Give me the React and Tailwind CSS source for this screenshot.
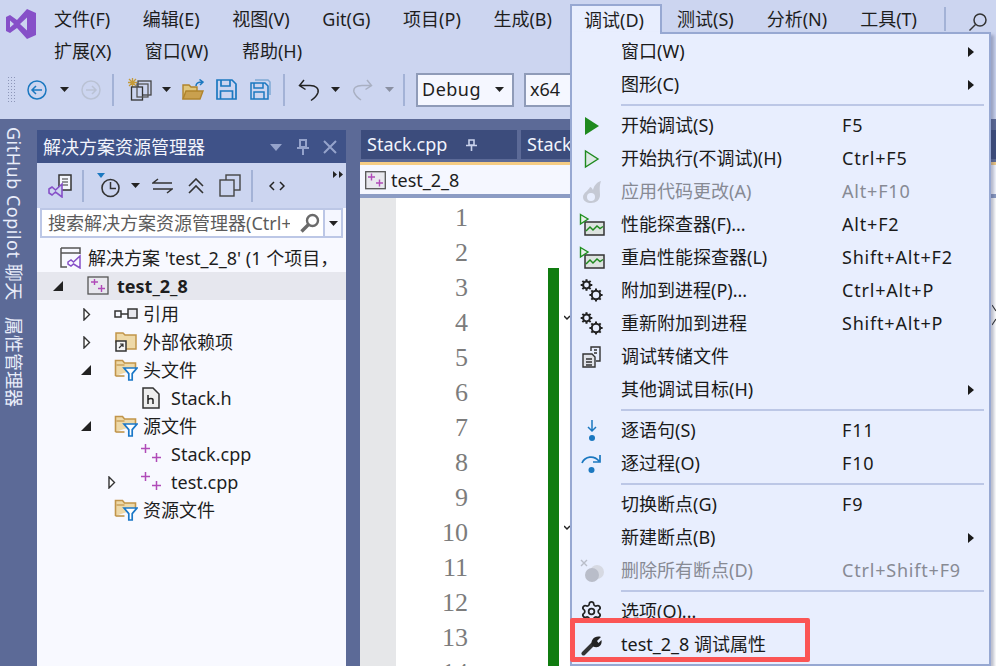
import { Settings } from "lucide-react";

const menuRow1 = ["文件(F)", "编辑(E)", "视图(V)", "Git(G)", "项目(P)", "生成(B)"];

function PlusPlus({ size = 22, color = "#b04bb8" }) {
  return (
    <svg width={size} height={size} viewBox="0 0 22 22" fill="none" stroke={color} strokeWidth="1.5">
      <path d="M1 5.5h9M5.5 1v9M12 14.5h9M16.5 10v9" />
    </svg>
  );
}

function ProjectIcon() {
  return (
    <svg width="22" height="20" viewBox="0 0 22 20" fill="none">
      <rect x="1" y="1" width="20" height="17" fill="#e8e8ee" stroke="#555" strokeWidth="1.3" />
      <path d="M4 6h7M7.5 3v6" stroke="#b04bb8" strokeWidth="1.4" />
      <path d="M11 12.5h7M14.5 9v7" stroke="#b04bb8" strokeWidth="1.4" />
    </svg>
  );
}

function FilterFolder() {
  return (
    <svg width="24" height="24" viewBox="0 0 24 24" fill="none">
      <path d="M1.5 18V2.5h7l2 2.5h11v6" fill="#eed9a8" stroke="#c1954a" strokeWidth="1.6" />
      <path d="M1.5 18h9" stroke="#c1954a" strokeWidth="1.6" />
      <path d="M2.5 7h8" stroke="#c1954a" strokeWidth="1.2" />
      <path d="M10 10h13l-4.8 5.6V22h-3.4v-6.4z" fill="#fff" stroke="#1b78c8" strokeWidth="1.7" />
    </svg>
  );
}

function TreeOpen() {
  return (
    <svg width="10" height="10" viewBox="0 0 10 10">
      <path d="M0 10L10 0v10z" fill="#222" />
    </svg>
  );
}

function TreeClosed() {
  return (
    <svg width="8" height="13" viewBox="0 0 8 13" fill="none">
      <path d="M1 1l5.5 5.500L1 12z" stroke="#333" strokeWidth="1.4" fill="#fff" />
    </svg>
  );
}

// small toothed gear: a ring plus eight short teeth
function Gear({ r, x, y }) {
  const teeth = [0, 45, 90, 135, 180, 225, 270, 315];
  return (
    <g transform={`translate(${x} ${y})`} stroke="#222">
      <circle r={r} fill="none" strokeWidth="2" />
      {teeth.map((a) => (
        <path key={a} d={`M${r} 0h2.4`} strokeWidth="2" transform={`rotate(${a})`} />
      ))}
    </g>
  );
}

function GearsIcon() {
  return (
    <svg width="24" height="24" viewBox="0 0 24 24">
      <Gear r={3.4} x={6.5} y={6} />
      <Gear r={4.2} x={16} y={16} />
    </svg>
  );
}

function PerfIcon() {
  return (
    <svg width="26" height="24" viewBox="0 0 26 24" fill="none">
      <path d="M6 9h19v13H6z" fill="#dde3e0" stroke="#333" strokeWidth="1.5" />
      <path d="M7 18l4-4 3 3 4-4 3 2.500 3-2" stroke="#1f8a1f" strokeWidth="1.5" />
      <path d="M1.500 1.500L9 6l-7.500 5z" fill="#e8f0ea" stroke="#1f8f1f" strokeWidth="1.4" />
    </svg>
  );
}

function MenuRow({ icon, label, keys, arrow, disabled }) {
  return (
    <div className={`flex h-[33px] items-center ${disabled ? "text-[#878a94]" : "text-[#1a1a1a]"}`}>
      <div className="flex w-[49px] justify-center pr-[10px]">{icon}</div>
      <div className="w-[221px] whitespace-nowrap">{label}</div>
      <div className="flex-1 whitespace-nowrap tracking-[0.8px]">{keys}</div>
      {arrow && (
        <svg className="mr-[15px]" width="6" height="10" viewBox="0 0 6 10">
          <path d="M0 0l6 5-6 5z" fill="#1a1a1a" />
        </svg>
      )}
    </div>
  );
}

function MenuSep() {
  return (
    <div className="flex h-[8px] items-center pl-[49px] pr-[5px]">
      <div className="h-[2px] w-full bg-[#bcc7e6]" />
    </div>
  );
}

function TreeRow({ indent, arrow, icon, label, selected, gap = "ml-[4px]" }) {
  return (
    <div className={`flex h-[28px] items-center whitespace-nowrap ${selected ? "bg-[#e6e7ee] font-bold" : ""}`}>
      <div className="flex shrink-0 items-center justify-center" style={{ width: indent }}>
        <span className="ml-auto mr-[22px] flex">{arrow}</span>
      </div>
      <div className="flex w-[26px] shrink-0 justify-center">{icon}</div>
      <div className={gap}>{label}</div>
    </div>
  );
}

export default function App() {
  const nums = [1, 2, 3, 4, 5, 6, 7, 8, 9, 10, 11, 12, 13, 14];

  return (
    <div className="relative flex h-[666px] w-[996px] flex-col overflow-hidden bg-[#ccd5f0] font-['Noto_Sans','Noto_Sans_CJK_SC',sans-serif] text-[18px] text-[#1e1e1e]">
      {/* title bar with the menus */}
      <div className="flex h-[70px] shrink-0">
        <div className="flex w-[54px] shrink-0 pt-[9px] pl-[6px]">
          <svg width="30" height="30" viewBox="0 0 30 30">
            <path d="M0 8L4 6 11 11 21 0 30 4V26L21 30 11 19 4 24 0 22zM4 11.500V18.500L8 15zM21 8.500L14 15 21 21.500z" fill="#8650c8" fillRule="evenodd" />
          </svg>
        </div>
        <div className="flex flex-1 flex-col">
          <div className="flex h-[34px] items-center gap-[32.6px] pt-[5px]">
            {menuRow1.map((t) => (
              <span key={t} className="whitespace-nowrap">{t}</span>
            ))}
          </div>
          <div className="flex h-[32px] items-center gap-[33.5px] pt-[2px]">
            <span>扩展(X)</span>
            <span>窗口(W)</span>
            <span>帮助(H)</span>
          </div>
        </div>
      </div>

      {/* toolbar */}
      <div className="flex h-[49px] shrink-0 items-center pl-[7px] pb-[10px]">
        <div className="h-[28px] w-[9px] bg-[radial-gradient(#8d96b8_1px,transparent_1px)] bg-[length:3px_3px]" />
        <svg className="ml-[11px]" width="20" height="20" viewBox="0 0 20 20" fill="none" stroke="#1b78c0" strokeWidth="1.5">
          <circle cx="10" cy="10" r="9" />
          <path d="M15 10H5M9 6l-4 4 4 4" />
        </svg>
        <svg className="ml-[13px]" width="9" height="5" viewBox="0 0 9 5"><path d="M0 0h9L4.500 5z" fill="#222" /></svg>
        <svg className="ml-[12px]" width="20" height="20" viewBox="0 0 20 20" fill="none" stroke="#bac2d4" strokeWidth="1.5">
          <circle cx="10" cy="10" r="9" />
          <path d="M5 10h10M11 6l4 4-4 4" />
        </svg>
        <div className="ml-[11px] h-[32px] w-[2px] bg-[#a3b2d6]" />
        <svg className="ml-[14px]" width="25" height="24" viewBox="0 0 25 24" fill="none">
          <path d="M1 1l7 7M8 1L1 8M4.500 0v9M0 4.500h9" stroke="#c49a3a" strokeWidth="1.3" />
          <rect x="10" y="3" width="13" height="14" stroke="#444" strokeWidth="1.3" />
          <rect x="3.500" y="9" width="11" height="13" fill="#ccd5f0" stroke="#333" strokeWidth="1.3" />
          <rect x="9" y="6" width="11" height="13" stroke="#555" strokeWidth="1.3" />
        </svg>
        <svg className="ml-[9px]" width="9" height="5" viewBox="0 0 9 5"><path d="M0 0h9L4.500 5z" fill="#222" /></svg>
        <svg className="ml-[11px]" width="23" height="22" viewBox="0 0 23 22" fill="none">
          <path d="M1 20V6h6l2 2h6v4" fill="#e0c67c" stroke="#b0842c" strokeWidth="1.4" />
          <path d="M1 20l3-8h17l-3 8z" fill="#c9a04e" stroke="#b0842c" strokeWidth="1.4" />
          <path d="M14 7c0-3 2-4 6-4M17.500 0.500L21 3l-3 3" stroke="#1b78c0" strokeWidth="1.5" />
        </svg>
        <svg className="ml-[11px]" width="21" height="21" viewBox="0 0 21 21" fill="none" stroke="#1b78c0" strokeWidth="1.7">
          <path d="M1 1h15l4 4v15H1z" />
          <path d="M5 1v6h9V1M4.500 20v-8h12v8" />
        </svg>
        <svg className="ml-[13px]" width="21" height="21" viewBox="0 0 21 21" fill="none" stroke="#1b78c0" strokeWidth="1.5">
          <path d="M5 1h13l2 2v13" stroke="#7fa9d4" />
          <path d="M1 4h14l3 3v13H1z" />
          <path d="M4 4v5h9V4M4 20v-7h10v7" />
        </svg>
        <div className="ml-[12px] h-[32px] w-[2px] bg-[#a3b2d6]" />
        <svg className="ml-[13px]" width="22" height="24" viewBox="0 0 22 24" fill="none" stroke="#222" strokeWidth="1.5">
          <path d="M6 2L1.500 7.500l6 4M2 7.500h10c6 0 9 3 8 7-1 3-4 6-7 8" />
        </svg>
        <svg className="ml-[11px]" width="9" height="5" viewBox="0 0 9 5"><path d="M0 0h9L4.500 5z" fill="#222" /></svg>
        <svg className="ml-[13px]" width="20" height="24" viewBox="0 0 20 24" fill="none" stroke="#a9b0c2" strokeWidth="1.5">
          <path d="M14 2l4.500 5.500-6 4M18 7.500H9C3 7.500 0 10 1 14c1 3 4 6 7 8" />
        </svg>
        <svg className="ml-[12px]" width="9" height="5" viewBox="0 0 9 5"><path d="M0 0h9L4.500 5z" fill="#8a90a2" /></svg>
        <div className="ml-[9px] h-[32px] w-[2px] bg-[#a3b2d6]" />
        <div className="ml-[11px] flex h-[34px] w-[98px] items-center justify-between border-2 border-[#8f9bb8] bg-[#f5f7ff] pl-[4px] pr-[8px]">
          <span className="tracking-[0.5px]">Debug</span>
          <svg width="9" height="5" viewBox="0 0 9 5"><path d="M0 0h9L4.500 5z" fill="#222" /></svg>
        </div>
        <div className="ml-[10px] flex h-[34px] w-[60px] items-center border-2 border-[#8f9bb8] bg-[#f5f7ff] pl-[4px]">x64</div>
      </div>

      {/* body */}
      <div className="flex min-h-0 flex-1 bg-[#5c6a97]">
        {/* vertical tabs */}
        <div className="w-[37px] shrink-0 pt-[8px]">
          <div className="flex w-[28px] items-center gap-[16px] whitespace-nowrap leading-[28px] text-[#e9edfa] [text-orientation:sideways] [writing-mode:vertical-rl]">
            <span className="tracking-[0.5px]">GitHub Copilot 聊天</span>
            <span>属性管理器</span>
          </div>
        </div>

        {/* solution explorer */}
        <div className="mt-[11px] flex w-[309px] shrink-0 flex-col bg-[#f8f9ff]">
          <div className="flex h-[33px] shrink-0 items-center bg-[#3f5288] pl-[6px] pr-[9px] pt-[1px] text-[#f2f4fc]">
            <span>解决方案资源管理器</span>
            <svg className="ml-auto" width="12" height="7" viewBox="0 0 12 7"><path d="M0 0h12L6 7z" fill="#95a3cb" /></svg>
            <svg className="ml-[15px]" width="12" height="16" viewBox="0 0 12 16" fill="none" stroke="#95a3cb" strokeWidth="2">
              <path d="M3 1h6v7H3zM0 9h12M6 9v7" />
            </svg>
            <svg className="ml-[14px]" width="14" height="14" viewBox="0 0 14 14" stroke="#95a3cb" strokeWidth="2">
              <path d="M1 1l12 12M13 1L1 13" />
            </svg>
          </div>

          <div className="relative flex h-[45px] shrink-0 items-center bg-[#ccd5f0] pl-[11px]">
            <svg width="24" height="24" viewBox="0 0 24 24" fill="none">
              <rect x="11" y="1" width="12" height="15" fill="#f4f6fc" stroke="#333" strokeWidth="1.5" />
              <path d="M14 5h6M14 8h6M14 11h6" stroke="#333" strokeWidth="1.2" />
              <path d="M1 15l3-2 3.500 3L14 10v13l-6.500-5L4 21l-3-2z" fill="#ccd5f0" stroke="#8650c8" strokeWidth="1.6" />
            </svg>
            <div className="ml-[10px] h-[32px] w-[2px] bg-[#a3b2d6]" />
            <svg className="ml-[13px]" width="24" height="26" viewBox="0 0 24 26" fill="none">
              <path d="M0 0h8L4 5z" fill="#1b78c0" />
              <circle cx="13.500" cy="15" r="8.500" stroke="#333" strokeWidth="1.6" />
              <path d="M13.500 9v6.500H19" stroke="#333" strokeWidth="1.5" />
            </svg>
            <svg className="ml-[10px]" width="9" height="5" viewBox="0 0 9 5"><path d="M0 0h9L4.500 5z" fill="#222" /></svg>
            <svg className="ml-[12px]" width="21" height="16" viewBox="0 0 21 16" fill="none" stroke="#333" strokeWidth="1.5">
              <path d="M20 5H1l5-4M1 11h19l-5 4" />
            </svg>
            <svg className="ml-[15px]" width="16" height="16" viewBox="0 0 16 16" fill="none" stroke="#333" strokeWidth="1.6">
              <path d="M1 8l7-7 7 7M1 15l7-7 7 7" />
            </svg>
            <svg className="ml-[15px]" width="22" height="24" viewBox="0 0 22 24" fill="none" stroke="#444" strokeWidth="1.4">
              <rect x="7" y="1" width="14" height="15" />
              <rect x="1" y="6" width="14" height="16" fill="#ccd5f0" />
            </svg>
            <div className="ml-[10px] h-[32px] w-[2px] bg-[#a3b2d6]" />
            <svg className="ml-[16px]" width="16" height="10" viewBox="0 0 16 10" fill="none" stroke="#222" strokeWidth="1.5">
              <path d="M5 1L1 5l4 4M11 1l4 4-4 4" />
            </svg>
            <svg className="absolute top-[8px] right-[3px]" width="10" height="7" viewBox="0 0 10 7"><path d="M0 0l4 3.500L0 7zM6 0l4 3.500L6 7z" fill="#222" /></svg>
          </div>

          <div className="mx-[3px] flex h-[30px] shrink-0 border-2 border-[#bcc7e6] bg-[#fff]">
            <div className="w-[248px] overflow-hidden whitespace-nowrap pl-[6px] leading-[26px] text-[#5c5c5c]">搜索解决方案资源管理器(Ctrl+E)</div>
            <svg className="ml-[10px] mt-[3px]" width="20" height="20" viewBox="0 0 20 20" fill="none" stroke="#6a6a6a">
              <circle cx="12.500" cy="7.500" r="5.500" strokeWidth="2.400" />
              <path d="M8.500 11.500L1.500 18.500" strokeWidth="3.400" />
            </svg>
            <div className="ml-auto flex w-[18px] items-center justify-center border-l-2 border-[#bcc7e6] bg-[#f5f7ff]">
              <svg width="9" height="5" viewBox="0 0 9 5"><path d="M0 0h9L4.500 5z" fill="#222" /></svg>
            </div>
          </div>

          <div className="pt-[6px]">
            <div className="flex h-[28px] items-center overflow-hidden whitespace-nowrap pl-[23px]">
              <svg className="shrink-0" width="22" height="22" viewBox="0 0 22 22" fill="none">
                <path d="M1 6h19M1 1h19v6M1 1v19h6" stroke="#555" strokeWidth="1.5" />
                <path d="M8 15l3-2 2.500 2L20 9v12l-6.500-4L11 19l-3-2z" fill="#f8f9ff" stroke="#8650c8" strokeWidth="1.5" />
              </svg>
              <span className="ml-[6px]">解决方案 'test_2_8' (1 个项目，</span>
            </div>
            <TreeRow indent={48} selected arrow={<TreeOpen />} icon={<ProjectIcon />} label="test_2_8" gap="ml-[6px]" />
            <TreeRow indent={76} arrow={<TreeClosed />} icon={
              <svg width="24" height="14" viewBox="0 0 24 14" fill="none" stroke="#333" strokeWidth="1.500">
                <rect x="1" y="4" width="6" height="6" /><path d="M7 7h7" /><rect x="14" y="2" width="9" height="9" fill="#e8e8ee" />
              </svg>
            } label="引用" />
            <TreeRow indent={76} arrow={<TreeClosed />} icon={
              <svg width="22" height="20" viewBox="0 0 22 20" fill="none">
                <path d="M1 11V1h7l2 2h11v14H11" fill="#eed9a8" stroke="#c1954a" strokeWidth="1.500" />
                <rect x="1" y="9" width="10" height="10" fill="#f5f5f5" stroke="#333" strokeWidth="1.500" />
                <path d="M4 16l4-4M5 12h3v3" stroke="#333" strokeWidth="1.200" />
              </svg>
            } label="外部依赖项" />
            <TreeRow indent={76} arrow={<TreeOpen />} icon={<FilterFolder />} label="头文件" />
            <TreeRow indent={101} gap="ml-[7px]" icon={
              <svg width="18" height="22" viewBox="0 0 18 22" fill="none">
                <path d="M1 1h10l6 6v14H1z" fill="#eee" stroke="#333" strokeWidth="1.500" />
                <path d="M6 8v9M6 13c1-2 5-2 5 0v4" stroke="#222" strokeWidth="1.500" />
              </svg>
            } label="Stack.h" />
            <TreeRow indent={76} arrow={<TreeOpen />} icon={<FilterFolder />} label="源文件" />
            <TreeRow indent={101} gap="ml-[7px]" icon={<PlusPlus />} label="Stack.cpp" />
            <TreeRow indent={101} gap="ml-[7px]" arrow={<TreeClosed />} icon={<PlusPlus />} label="test.cpp" />
            <TreeRow indent={76} icon={<FilterFolder />} label="资源文件" />
          </div>
        </div>

        <div className="w-[14px] shrink-0" />

        {/* editor side */}
        <div className="mt-[11px] flex min-w-0 flex-1 flex-col">
          <div className="flex h-[30px] shrink-0 gap-[4px] pb-[1px] text-[#f2f4fc]">
            <div className="ml-[1px] flex w-[156px] items-center bg-[#3c4c7c] pl-[6px]">
              <span>Stack.cpp</span>
              <svg className="ml-[19px]" width="11" height="12" viewBox="0 0 11 12" fill="none" stroke="#c9d2ec" strokeWidth="1.600">
                <path d="M3 1h5v5H3zM0 6.500h11M5.500 7v5" />
              </svg>
            </div>
            <div className="flex flex-1 items-center bg-[#3c4c7c] pl-[6px]">Stack</div>
          </div>
          <div className="h-[5px] shrink-0 border-t-2 border-[#5c6a97] bg-[#f5cc84]" />
          <div className="flex h-[33px] shrink-0 items-center border-b-[4px] border-[#8c9cc4] bg-[#f5f7ff] pl-[5px] pt-[1px]">
            <svg width="21" height="19" viewBox="0 0 21 19" fill="none">
              <rect x="0.700" y="0.700" width="19.600" height="17" fill="#e8e8ee" stroke="#555" strokeWidth="1.300" />
              <path d="M3 6h7M6.500 2.500v7M11 12h7M14.500 8.500v7" stroke="#b04bb8" strokeWidth="1.400" />
            </svg>
            <span className="ml-[5px]">test_2_8</span>
          </div>
          <div className="flex min-h-0 flex-1 overflow-hidden bg-white">
            <div className="w-[36px] shrink-0 bg-[#e6e7e9]" />
            <div className="w-[72px] shrink-0 pt-[2px] text-right font-['Liberation_Serif',serif] text-[26px] text-[#7c7c7c]">
              {nums.map((n) => (
                <div key={n} className="h-[35px] leading-[35px]">{n}</div>
              ))}
            </div>
            <div className="ml-[80px] mt-[70px] w-[11px] shrink-0 bg-[#107c10]" />
            <div className="flex-1 bg-white" />
          </div>
        </div>
      </div>

      {/* fold marks peeking out beside the menu */}
      <svg className="absolute top-[315px] left-[564px]" width="6" height="6" viewBox="0 0 6 6" fill="none" stroke="#222" strokeWidth="1.500"><path d="M0 1l3 3 3-3" /></svg>
      <svg className="absolute top-[525px] left-[564px]" width="6" height="6" viewBox="0 0 6 6" fill="none" stroke="#222" strokeWidth="1.500"><path d="M0 1l3 3 3-3" /></svg>
      <svg className="absolute top-[304px] left-[992px]" width="4" height="22" viewBox="0 0 4 22" fill="none" stroke="#333" strokeWidth="1.200"><path d="M0 1l4 6M4 15l-4 6" /></svg>

      {/* top menu items behind the open menu */}
      <div className="absolute top-0 left-[677px] flex h-[34px] items-center gap-[33px] whitespace-nowrap pt-[5px]">
        <span>测试(S)</span>
        <span>分析(N)</span>
        <span>工具(T)</span>
      </div>
      <div className="absolute top-[7px] left-[944px] h-[24px] w-[2px] bg-[#a3b2d6]" />
      <svg className="absolute top-[12px] left-[968px]" width="20" height="20" viewBox="0 0 20 20" fill="none" stroke="#333" strokeWidth="1.500">
        <circle cx="12" cy="8" r="6" /><path d="M7.500 12.500L1.500 18.500" />
      </svg>

      {/* open debug menu */}
      <div className="absolute top-[4px] left-[570px] flex h-[30px] w-[92px] items-center border-x-2 border-t-2 border-[#97a8d2] bg-[#e8eefe] pl-[12px]">调试(D)</div>
      <div className="absolute top-[32px] left-[570px] h-[634px] w-[421px] border-2 border-[#97a8d2] bg-[#e8eefe] pt-[1px] shadow-[3px_3px_3px_rgba(60,70,110,0.35)]">
        <div className="absolute -top-[2px] left-0 h-[4px] w-[88px] bg-[#e8eefe]" />
        <div className="relative">
          <MenuRow label="窗口(W)" arrow />
          <MenuRow label="图形(C)" arrow />
          <MenuSep />
          <MenuRow label="开始调试(S)" keys="F5" icon={
            <svg width="16" height="20" viewBox="0 0 16 20"><path d="M1 1v18l14-9z" fill="#1f8a1f" /></svg>
          } />
          <MenuRow label="开始执行(不调试)(H)" keys="Ctrl+F5" icon={
            <svg width="16" height="20" viewBox="0 0 16 20" fill="#dce8e4" stroke="#1f8a1f" strokeWidth="1.400"><path d="M1.500 2v16L14 10z" /></svg>
          } />
          <MenuRow disabled label="应用代码更改(A)" keys="Alt+F10" icon={
            <svg width="22" height="24" viewBox="0 0 22 24">
              <path d="M20 1c-6 2-7 6-8 9-1-2-2-3-3-3-1 3-7 6-7 10 0 4 4 6 8 6 5 0 9-3 9-8 0-5-1-8 1-14z" fill="#c5c9d4" />
              <circle cx="10" cy="17" r="4" fill="#e8eefe" />
            </svg>
          } />
          <MenuRow label="性能探查器(F)..." keys="Alt+F2" icon={<PerfIcon />} />
          <MenuRow label="重启性能探查器(L)" keys="Shift+Alt+F2" icon={<PerfIcon />} />
          <MenuRow label="附加到进程(P)..." keys="Ctrl+Alt+P" icon={<GearsIcon />} />
          <MenuRow label="重新附加到进程" keys="Shift+Alt+P" icon={<GearsIcon />} />
          <MenuRow label="调试转储文件" icon={
            <svg width="20" height="22" viewBox="0 0 20 22" fill="none" stroke="#333" strokeWidth="1.400">
              <path d="M9 5V1h9v14h-4" /><path d="M12 4h3M12 7h3" />
              <path d="M1 8h9l3 3v10H1z" fill="#e0e2e8" /><path d="M4 13h6M4 16h6M4 19h6" />
            </svg>
          } />
          <MenuRow label="其他调试目标(H)" arrow />
          <MenuSep />
          <MenuRow label="逐语句(S)" keys="F11" icon={
            <svg width="14" height="22" viewBox="0 0 14 22" fill="none" stroke="#1b78c0" strokeWidth="1.500">
              <path d="M7 0v11M3 7l4 4 4-4" /><circle cx="7" cy="18" r="3" fill="#1b78c0" stroke="none" />
            </svg>
          } />
          <MenuRow label="逐过程(O)" keys="F10" icon={
            <svg width="22" height="20" viewBox="0 0 22 20" fill="none" stroke="#1b78c0" strokeWidth="1.700">
              <path d="M1 9c3-7 12-8 17-2M19 1v7h-7" /><circle cx="10.500" cy="16" r="3" fill="#1b78c0" stroke="none" />
            </svg>
          } />
          <MenuSep />
          <MenuRow label="切换断点(G)" keys="F9" />
          <MenuRow label="新建断点(B)" arrow />
          <MenuRow disabled label="删除所有断点(D)" keys="Ctrl+Shift+F9" icon={
            <svg width="24" height="24" viewBox="0 0 24 24">
              <path d="M1 1l6 6M7 1L1 7" stroke="#b9bdc9" strokeWidth="1.400" />
              <circle cx="17" cy="13" r="7" fill="#d6d9e2" /><circle cx="12" cy="16" r="7" fill="#b9bdc9" />
            </svg>
          } />
          <MenuSep />
          <MenuRow label="选项(O)..." icon={<Settings size={23} strokeWidth={1.8} color="#222" />} />
          <MenuRow label="test_2_8 调试属性" icon={
            <svg width="22" height="22" viewBox="0 0 22 22" fill="none">
              <path d="M2.500 19.500L12 10" stroke="#333" strokeWidth="4" strokeLinecap="round" />
              <path d="M11 11c-2-5 3-10 9-8l-4 4 1.500 2 3-3c1 6-4 9-9 6z" fill="#222" />
            </svg>
          } />
        </div>
      </div>

      {/* red annotation box */}
      <div className="absolute top-[618px] left-[570px] h-[44px] w-[240px] rounded-[2px] border-[5px] border-[#fb5555]" />
    </div>
  );
}
